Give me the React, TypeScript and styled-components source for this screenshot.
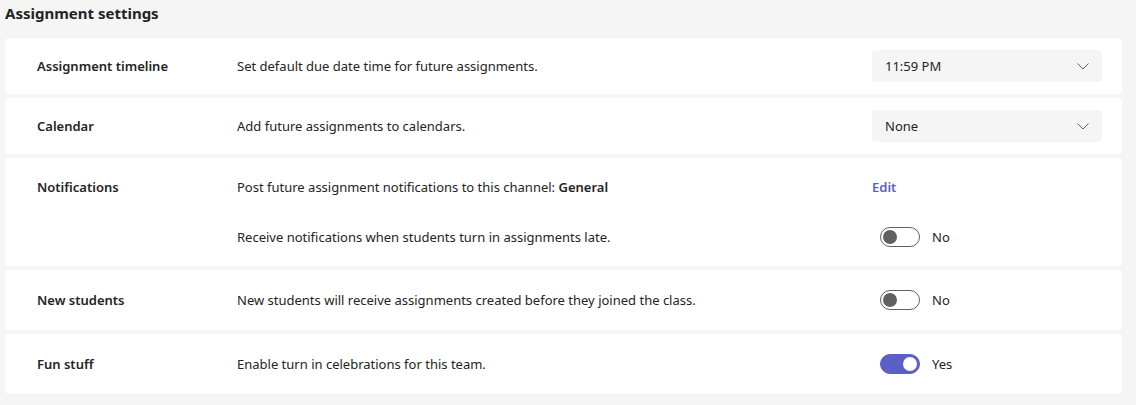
import * as React from "react"
import styled, { createGlobalStyle } from "styled-components"

const GlobalStyle = createGlobalStyle`
  html, body {
    margin: 0;
    padding: 0;
    background: #f5f5f5;
  }
  body {
    font-family: "Noto Sans", "Open Sans", Arial, sans-serif;
    color: #242424;
  }
`

const Page = styled.div`
  padding: 3px 14px 0 5px;
  display: flex;
  flex-direction: column;
`

const Heading = styled.h2`
  margin: 0 0 15px;
  font-size: 15px;
  line-height: 20px;
  font-weight: 700;
  color: #242424;
`

const CardList = styled.div`
  display: flex;
  flex-direction: column;
  gap: 4px;
`

const Card = styled.section<{ $height: number }>`
  background: #ffffff;
  border-radius: 4px;
  padding: 8px 20px 8px 32px;
  min-height: ${({ $height }) => $height}px;
  display: grid;
  grid-template-columns: 200px 1fr 230px;
  grid-auto-rows: 40px;
  row-gap: 10px;
  align-items: center;
  box-sizing: border-box;
  align-content: center;
`

const Label = styled.div`
  font-size: 13px;
  font-weight: 600;
  line-height: 20px;
  grid-column: 1;
`

const Description = styled.div`
  font-size: 13px;
  line-height: 20px;
  grid-column: 2;

  b {
    font-weight: 600;
  }
`

const Control = styled.div`
  grid-column: 3;
  display: flex;
  align-items: center;
`

const Dropdown = styled.button`
  width: 230px;
  height: 32px;
  border: none;
  border-radius: 4px;
  background: #f5f5f5;
  display: flex;
  align-items: center;
  justify-content: space-between;
  padding: 0 13px 0 13px;
  font-family: inherit;
  font-size: 13px;
  color: #242424;
  cursor: pointer;
`

const Chevron = () => (
  <svg width="12" height="7" viewBox="0 0 12 7" fill="none">
    <path d="M0.5 0.5 L6 6 L11.5 0.5" stroke="#616161" strokeWidth="1" />
  </svg>
)

const LinkButton = styled.a`
  font-size: 13px;
  font-weight: 600;
  color: #5b5fc7;
  text-decoration: none;
  cursor: pointer;
`

const ToggleWrap = styled.label`
  display: flex;
  align-items: center;
  gap: 12px;
  padding-left: 8px;
  font-size: 13px;
`

const Track = styled.span<{ $on: boolean }>`
  width: 40px;
  height: 20px;
  border-radius: 10px;
  box-sizing: border-box;
  border: 1px solid ${({ $on }) => ($on ? "#5b5fc7" : "#616161")};
  background: ${({ $on }) => ($on ? "#5b5fc7" : "#ffffff")};
  display: flex;
  align-items: center;
  justify-content: ${({ $on }) => ($on ? "flex-end" : "flex-start")};
  padding: 0 2px;
`

const Knob = styled.span<{ $on: boolean }>`
  width: 14px;
  height: 14px;
  border-radius: 50%;
  background: ${({ $on }) => ($on ? "#ffffff" : "#616161")};
`

const Toggle = ({ on }: { on: boolean }) => (
  <ToggleWrap>
    <Track $on={on}>
      <Knob $on={on} />
    </Track>
    {on ? "Yes" : "No"}
  </ToggleWrap>
)

export default function App() {
  return (
    <Page>
      <GlobalStyle />
      <Heading>Assignment settings</Heading>
      <CardList>
        <Card $height={56}>
          <Label>Assignment timeline</Label>
          <Description>Set default due date time for future assignments.</Description>
          <Control>
            <Dropdown>
              11:59 PM
              <Chevron />
            </Dropdown>
          </Control>
        </Card>

        <Card $height={56}>
          <Label>Calendar</Label>
          <Description>Add future assignments to calendars.</Description>
          <Control>
            <Dropdown>
              None
              <Chevron />
            </Dropdown>
          </Control>
        </Card>

        <Card $height={108}>
          <Label>Notifications</Label>
          <Description>
            Post future assignment notifications to this channel: <b>General</b>
          </Description>
          <Control>
            <LinkButton>Edit</LinkButton>
          </Control>
          <Description>Receive notifications when students turn in assignments late.</Description>
          <Control>
            <Toggle on={false} />
          </Control>
        </Card>

        <Card $height={60}>
          <Label>New students</Label>
          <Description>New students will receive assignments created before they joined the class.</Description>
          <Control>
            <Toggle on={false} />
          </Control>
        </Card>

        <Card $height={60}>
          <Label>Fun stuff</Label>
          <Description>Enable turn in celebrations for this team.</Description>
          <Control>
            <Toggle on={true} />
          </Control>
        </Card>
      </CardList>
    </Page>
  )
}
